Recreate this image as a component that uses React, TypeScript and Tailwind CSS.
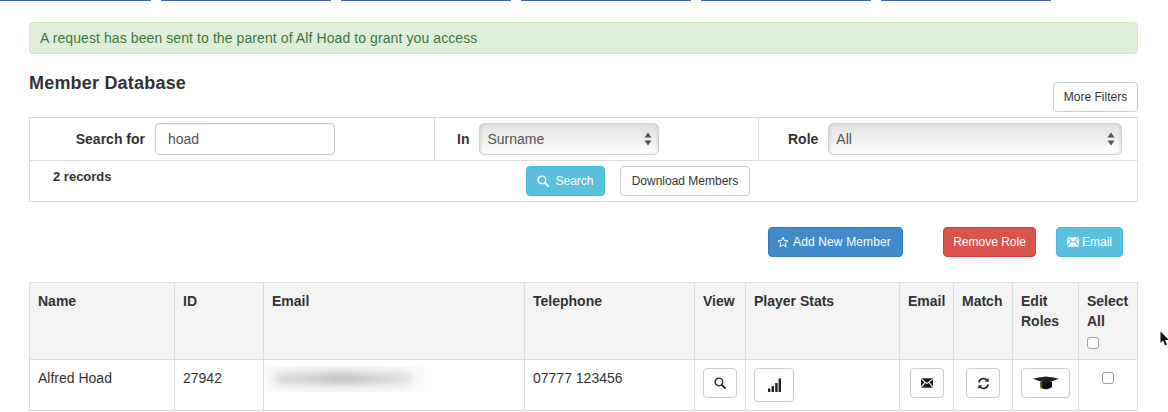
import React from "react";

const font = "font-['Liberation_Sans',Arial,sans-serif]";
const btn = "flex items-center justify-center rounded-[4px] border text-[12px] leading-none whitespace-nowrap";
const whiteBtn = `${btn} border-[#cccccc] bg-white text-[#333333]`;

function SearchIcon({ color = "#222" }: { color?: string }) {
  return (
    <svg viewBox="0 0 12 12" width="12" height="12">
      <circle cx="4.9" cy="4.9" r="3.8" fill="none" stroke={color} strokeWidth="1.4" />
      <path d="M7.8 7.8 L11 11" stroke={color} strokeWidth="1.9" strokeLinecap="round" />
    </svg>
  );
}

function Envelope({ color, line, w = 14, h = 11 }: { color: string; line: string; w?: number; h?: number }) {
  return (
    <svg viewBox="0 0 14 11" width={w} height={h}>
      <rect x="0" y="0" width="14" height="11" fill={color} />
      <path d="M0 0.4 L7 6.2 L14 0.4 M0 10.6 L5 4.6 M14 10.6 L9 4.6" fill="none" stroke={line} strokeWidth="1.3" />
    </svg>
  );
}

function Updown() {
  return (
    <svg viewBox="0 0 8 14" width="8" height="14" className="absolute right-[7px] top-[9px] pointer-events-none">
      <path d="M4 0.5 L7.5 5.5 H0.5 Z M4 13.5 L7.5 8.5 H0.5 Z" fill="#555" />
    </svg>
  );
}

function Sel({ value, width }: { value: string; width: string }) {
  return (
    <div className={`relative h-[32px] ${width}`}>
      <select
        defaultValue={value}
        className="h-full w-full appearance-none rounded-[5px] border border-[#d4d4d4] bg-gradient-to-b from-[#e2e2e2] via-[#efefef] to-white pl-[7px] text-[14px] text-[#555555] shadow-[inset_2px_0_2px_rgba(0,0,0,0.08),inset_-2px_0_2px_rgba(0,0,0,0.06)]"
      >
        <option>{value}</option>
      </select>
      <Updown />
    </div>
  );
}

const head = ["Name", "ID", "Email", "Telephone", "View", "Player Stats", "Email", "Match"];
const widths = ["w-[145px]", "w-[89px]", "w-[261px]", "w-[170px]", "w-[51px]", "w-[154px]", "w-[54px]", "w-[59px]", "w-[66px]", "w-[59px]"];
const th = "border border-[#dddddd] p-[8px] text-left align-top text-[14px] font-bold leading-[20px] text-[#333333]";
const td = "border border-[#dddddd] px-[8px] align-top text-[14px] leading-[20px] text-[#333333]";

function Box() {
  return <span className="block h-[12px] w-[12px] rounded-[3px] border border-[#a0a0a0] bg-white" />;
}

export default function App() {
  return (
    <div className={`${font} relative h-[412px] w-[1168px] overflow-hidden bg-white text-[#333333]`}>
      <div className="flex gap-[10px]">
        <div className="h-px w-[151px] bg-[#3f67a8]" />
        {[0, 1, 2, 3, 4].map((i) => (
          <div key={i} className="h-px w-[170px] bg-[#3f67a8]" />
        ))}
      </div>

      <div className="ml-[29px] w-[1109px]">
        <div className="mt-[21px] h-[32px] rounded-[4px] border border-[#d6e9c6] bg-[#dff0d8] pl-[10px] text-[14px] leading-[30px] tracking-[0.09px] text-[#3c763d]">
          A request has been sent to the parent of Alf Hoad to grant you access
        </div>

        <div className="flex h-[63px] items-start justify-between">
          <h2 className="mt-[19px] text-[18px] font-bold leading-[20px] tracking-[0.2px] text-[#333333]">Member Database</h2>
          <button className={`${whiteBtn} mt-[28px] h-[30px] w-[85px]`}>More Filters</button>
        </div>

        <div className="border border-[#dddddd]">
          <div className="flex h-[43px] border-b border-[#dddddd]">
            <div className="flex w-[405px] items-center justify-end border-r border-[#dddddd] pr-[99px]">
              <label className="mr-[10px] text-[14px] font-bold">Search for</label>
              <input
                defaultValue="hoad"
                className="h-[32px] w-[180px] rounded-[4px] border border-[#cccccc] bg-white pl-[12px] text-[14px] text-[#555555] shadow-[inset_0_1px_1px_rgba(0,0,0,0.075)]"
              />
            </div>
            <div className="flex w-[324px] items-center border-r border-[#dddddd] pl-[22px]">
              <label className="mr-[10px] text-[14px] font-bold">In</label>
              <Sel value="Surname" width="w-[180px]" />
            </div>
            <div className="flex flex-1 items-center pl-[29px]">
              <label className="mr-[10px] text-[14px] font-bold">Role</label>
              <Sel value="All" width="w-[294px]" />
            </div>
          </div>
          <div className="relative flex h-[40px] pt-[5px]">
            <div className="ml-[23px] w-[473px] pt-[2px] text-[13px] font-bold leading-[18px]">2 records</div>
            <button className={`${btn} h-[30px] w-[79px] gap-[6px] border-[#46b8da] bg-[#5bc0de] text-white`}>
              <SearchIcon color="#fff" />
              Search
            </button>
            <button className={`${whiteBtn} ml-[15px] h-[30px] w-[130px]`}>Download Members</button>
          </div>
        </div>

        <div className="mt-[25px] flex h-[30px]">
          <button className={`${btn} ml-[739px] w-[135px] gap-[4px] border-[#357ebd] bg-[#428bca] tracking-[0.13px] text-white`}>
            <svg viewBox="0 0 24 24" width="12" height="12" fill="none" stroke="#fff" strokeWidth="2" className="-ml-[3px]">
              <path d="M12 2.5 L14.9 9 L22 9.7 L16.6 14.4 L18.2 21.4 L12 17.7 L5.8 21.4 L7.4 14.4 L2 9.7 L9.1 9 Z" />
            </svg>
            Add New Member
          </button>
          <button className={`${btn} ml-[40px] w-[93px] border-[#d43f3a] bg-[#d9534f] text-white`}>Remove Role</button>
          <button className={`${btn} ml-[20px] w-[67px] gap-[3px] border-[#46b8da] bg-[#5bc0de] text-white`}>
            <Envelope color="#fff" line="#5bc0de" w={12} h={10} />
            Email
          </button>
        </div>

        <table className="mt-[25px] w-[1108px] table-fixed border-collapse">
          <colgroup>
            {widths.map((w, i) => (
              <col key={i} className={w} />
            ))}
          </colgroup>
          <thead>
            <tr className="h-[77px] bg-[#f4f4f4]">
              {head.map((h, i) => (
                <th key={i} className={th}>
                  {h}
                </th>
              ))}
              <th className={th}>
                Edit
                <br />
                Roles
              </th>
              <th className={th}>
                Select
                <br />
                All
                <span className="mt-[6px] block">
                  <Box />
                </span>
              </th>
            </tr>
          </thead>
          <tbody>
            <tr className="h-[51px]">
              <td className={`${td} pt-[8px]`}>Alfred Hoad</td>
              <td className={`${td} pt-[8px]`}>27942</td>
              <td className={`${td} pt-[6px]`}>
                <div className="-ml-[7px] h-[26px] w-[160px] overflow-hidden bg-[#fbfbfb] pl-[8px] pt-[6px]">
                  <div className="h-[13px] w-[140px] rounded-full bg-gradient-to-r from-[#dcdcdc] via-[#bfbfbf] to-[#e2e2e2] blur-[4px]" />
                </div>
              </td>
              <td className={`${td} pt-[8px]`}>07777 123456</td>
              <td className={`${td} pt-[8px]`}>
                <button className={`${whiteBtn} h-[30px] w-[34px]`}>
                  <SearchIcon />
                </button>
              </td>
              <td className={`${td} pt-[8px]`}>
                <button className={`${whiteBtn} h-[34px] w-[40px]`}>
                  <svg viewBox="0 0 14 14" width="14" height="14">
                    <path d="M1 10.5h2.4V14H1zM4.6 8h2.4v6H4.6zM8.2 5h2.4v9H8.2zM11.6 0.5H14V14h-2.4z" fill="#222" />
                  </svg>
                </button>
              </td>
              <td className={`${td} pl-[10px] pt-[8px]`}>
                <button className={`${whiteBtn} h-[30px] w-[34px]`}>
                  <Envelope color="#1c1c1c" line="#fff" w={12} h={10} />
                </button>
              </td>
              <td className={`${td} pl-[12px] pt-[8px]`}>
                <button className={`${whiteBtn} h-[30px] w-[34px]`}>
                  <svg viewBox="0 0 14 14" width="13" height="13" fill="none" stroke="#222" strokeWidth="1.7">
                    <path d="M2 6 A5 5 0 0 1 11 3.8" />
                    <path d="M12 8 A5 5 0 0 1 3 10.2" />
                    <path d="M12.5 1 V5.2 H8.3 Z" fill="#222" stroke="none" />
                    <path d="M1.5 13 V8.8 H5.7 Z" fill="#222" stroke="none" />
                  </svg>
                </button>
              </td>
              <td className={`${td} pt-[8px]`}>
                <button className={`${whiteBtn} h-[30px] w-[49px]`}>
                  <svg viewBox="0 0 26 14" width="26" height="14">
                    <path d="M7 6 H19 V10.5 C17 14 9 14 7 10.5 Z" fill="#111" />
                    <path d="M0 2.8 C5 1.5 9 1 13 0.5 C17 1 21 1.5 26 2.8 L13 7.5 Z" fill="#1a2320" />
                    <path d="M8 5 V13" stroke="#b8962e" strokeWidth="1.2" />
                  </svg>
                </button>
              </td>
              <td className={`${td} pt-[12px]`}>
                <span className="ml-[15px] block">
                  <Box />
                </span>
              </td>
            </tr>
          </tbody>
        </table>
      </div>

      <svg viewBox="0 0 10 16" width="10" height="16" className="absolute left-[1160px] top-[331px]">
        <path d="M0.5 0.5 V12 L3.2 9.6 L5 14.5 L7 13.6 L5.2 9 H9 Z" fill="#111" />
      </svg>
    </div>
  );
}
